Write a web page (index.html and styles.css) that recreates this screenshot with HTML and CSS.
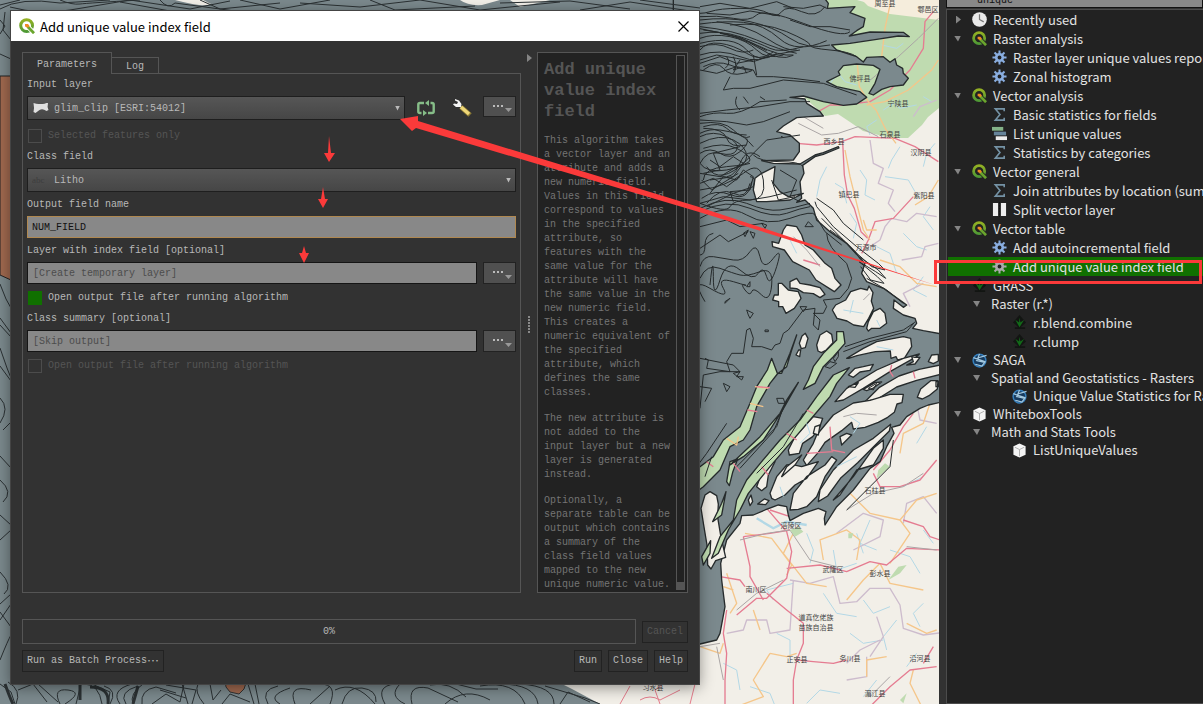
FILE: index.html
```html
<!DOCTYPE html>
<html lang="en">
<head>
<meta charset="utf-8">
<title>Add unique value index field</title>
<link rel="stylesheet" href="styles.css">
</head>
<body>
<svg class="defs" width="0" height="0" aria-hidden="true">
  <defs>
    <linearGradient id="qg" x1="0" y1="0" x2="0" y2="1"><stop offset="0" stop-color="#93b023"/><stop offset="1" stop-color="#4f9a35"/></linearGradient>
    <symbol id="qgis" viewBox="0 0 16 16"><circle cx="7.600" cy="7.600" r="5.900" fill="none" stroke="url(#qg)" stroke-width="3"/><path d="M8.500 8.500l7 7" stroke="#222" stroke-width="4.600"/><path d="M8.500 8.500l6.500 6.700" stroke="#6aa52d" stroke-width="2.800"/><path d="M6 6h3l1.500 2-1.500 1.800-3-1.300z" fill="#ef8a25"/></symbol>
    <symbol id="qgisw" viewBox="0 0 16 16"><circle cx="7.600" cy="7.600" r="5.900" fill="none" stroke="url(#qg)" stroke-width="3"/><path d="M8.500 8.500l7 7" stroke="#fff" stroke-width="4.600"/><path d="M8.500 8.500l6.500 6.700" stroke="#6aa52d" stroke-width="2.800"/><path d="M6 6h3l1.500 2-1.500 1.800-3-1.300z" fill="#ef8a25"/></symbol>
    <symbol id="gear" viewBox="0 0 16 16"><path d="M8 .5v15M.5 8h15M2.700 2.700l10.600 10.600M13.300 2.700L2.700 13.300" stroke="currentColor" stroke-width="2.200"/><circle cx="8" cy="8" r="3.500" fill="#222" stroke="currentColor" stroke-width="2.800"/></symbol>
    <symbol id="sigma" viewBox="0 0 16 16"><path d="M13 4.500V2H3.500L8.500 8l-5 6H13v-2.500" fill="none" stroke="#7492a5" stroke-width="1.700"/></symbol>
    <symbol id="list" viewBox="0 0 16 16"><path d="M0 1h12v4H0z" fill="#84b287"/><path d="M2 6h13v4H2z" fill="#66849a"/><path d="M4 11h12v4H4z" fill="#ececec"/></symbol>
    <symbol id="split" viewBox="0 0 16 16"><path d="M1 1h5.500v14H1zM9.500 1H15v14H9.500z" fill="#eee"/><path d="M8 0v16" stroke="#111" stroke-dasharray="2 1"/></symbol>
    <symbol id="clock" viewBox="0 0 16 16"><circle cx="8" cy="8" r="7.800" fill="#e9e9e9"/><path d="M8 2.500V8l4.500 2.500" fill="none" stroke="#777" stroke-width="1.300"/></symbol>
    <symbol id="grass" viewBox="0 0 16 16"><path d="M8 0l7 8-7 6-7-6zM3 13h11v2H3z" fill="#121512"/><path d="M8 13L3.500 5l4 3L8 3l1 5 4-3z" fill="#126a18"/></symbol>
    <symbol id="saga" viewBox="0 0 16 16"><circle cx="8" cy="8" r="6.800" fill="#173b5f" stroke="#357fbd" stroke-width="1.600"/><path d="M15.500 2.500L7 5 5 8l8.500 2-3 4-7-2M1.500 5l13 4.500M8 1L6 6" fill="none" stroke="#a3c8df" stroke-width="1.300"/></symbol>
    <symbol id="cube" viewBox="0 0 16 16"><path d="M8 .5l6.500 3v9L8 15.500l-6.500-3v-9z" fill="#f4f4f4"/><path d="M3 4.500L8 7l5-2.500M8 7v7" fill="none" stroke="#aaa"/></symbol>
  </defs>
</svg>

<main class="map">
  <svg class="canvas" viewBox="0 0 939 704" preserveAspectRatio="xMinYMin slice" role="img" aria-label="Lithology map">
    <rect width="939" height="704" fill="#f2efe8"/>
    <path class="veg" d="M780 0h77l33 9 49 6v93l-11 9-6 8-14 13h-18l-27-7-13-9-12-8-13 2-20-18z"/>
    <path d="M862 0l6 6 22 8 49 6V0z" fill="#f5eddc"/>
    <rect width="700" height="704" class="rock"/>
    <path d="M0 76h11v204l-11-5z" fill="#a0694f" stroke="#222"/>
    <path d="M225 680h22l-3 9-5 5-9-2-4-5z" fill="#a0694f" stroke="#333"/>
    <path d="M562 684l10 5 28 15h100v-20z" fill="#f2efe8"/>
    <path d="M175 0q30 8 36 4l-8-4zM460 0q8 6 22 5l18-5zM550 0l-30 7-10-7z" fill="#f2efe8"/>

    <g transform="translate(690 0) scale(.33333)">
      <g class="water">
        <path d="M420 250l25-30 20 25 35 10M600 200l-20 20 5 30-25 15M640 130l-20 15-45-10M580 330l30-20 20 15 50-10M700 290l25 15M560 360l-30 20 10 25M410 500l-20 40-10 50M470 610l-10-45-25-15M510 510l20 30-5 45 30 15M585 530l70 10 20 35M630 440l-25 40-10 25M700 500l10-40 25-30M480 640l20 30-10 45M720 620l-20 30 30 40M560 740l40 20 20 60M640 700l40 40 30 10M700 830l-30 40 40 20"/>
      </g>
      <g class="border"><path d="M540 420l10 70 30 15-15 45 45 20-15 40 20 25M740 650l-60-10-30 25-45-10-20 25-15 40-30 20M740 300l-50 20-20 30M745 730l-40 10-10 30-60 10M660 920l-20-40 60-30"/></g>
      <g class="road">
        <path d="M730 35l-25 30-5 80-40 65-60 60-60 35-80 10-40 0-45 25M320 430l60 5 75-10 40-15 120 5 60 25 70 45M458 425l5 100 10 60 20 40 20 70 20 20M670 590l-60 65-55 10-20 55-20 40"/>
      </g>
      <g class="orange"><path d="M745 180l-20 30-70 60-70 35-55 10M500 170l8 90 30 50 20 20 30 60 30 40M465 450l15 80 20 80 20 80 20 30M600 15l-15 70-10 85M745 540l-30 50-40 25M560 690l-30 0-10-30M740 860l-60-10-50-50-60-20"/></g>
      <g class="trail"><path d="M745 55l-60 60-60 55-90 75M325 370l70 35 50-5 60-20 60 30M340 350l60 35"/></g>
      <g class="water"><path d="M430 1650l10 60 60-20M500 1600l20 60M540 1560l-30 70 50 20M600 1650l60 20 30 50M700 1590l30 40M400 1780l40 60 60 10M250 1800l-20-30 80-20M350 2110l40-40 60 10M100 1990l40 20 10 60M480 1900l40 30 60-10M650 2000l30-40M700 1430l-60 30M710 1280l-30 50M520 1800l30 40 50-20M260 1900l40 20 0 50M620 1860l-40 50 10 40M700 1810l-30 30 20 40M560 2040l-40 50M180 2060l60 20 20 50M350 1600l20 50-10 40"/><path d="M200 1555l50 30 40-20 60 10" stroke-width="7"/></g>
      <g class="border"><path d="M300 1740l60 10 70-20 20 80 50-5 40-40 60 0 30 50 10 70 60 20 80-10M440 1600l80-60 60 20-10 50-80 40M740 1540l-40-50-50 20-10 60M110 1900l50-10 10-30 60 0 10 40 60-10 10-150M470 1990l40-40 60-30M560 1850l20 60-40 60M470 2040l60-10 0-60M680 1210l10 50 50 10"/></g>
      <g class="orange"><path d="M165 1600l80 15 60 80-15 30M310 1600l-30 60 70 90 60 10M400 1680l-10-60 80-30 40 30-10 60M570 1690l-50 50-50 60M570 1690l30 60 100 20M600 1690l60-90-30-40-90-20-60-60M110 1720l30 90-20 30M190 1830l20 60M240 1960l50 10 30-10M700 2130l-40-80 10-40M240 1960l-50 80 30 50-80 30M650 1870l60 30 30-10M30 1940l60 20 10-30M630 1560l50-60 60-20M100 1760l30 10M720 1210l-20 60-60 30-10 60M530 2030l0-50 60-10"/></g>
      <g class="road"><path d="M230 1525l60 70 15 60-15 80-60 60-30 0-60 50M160 1610l80-10 60-10M160 1610l20 90 0 30 40 70M290 1705l100-10 80 20 70-30 50 10 60-50 100 5M230 1780l60 50 50 40 0 60-20 50-10 60 0 100M320 1980l50 5 60 5 40-10M540 2120l60-60 60-50 80-10M90 1730l60 10 15 20M110 1830l-10 70 10 60-5 80 0 80M300 1550l-60-20M550 1420l20 40 60 0 60-20 50-60M730 1940l-30 50M640 1560l60 20 20 30 30 10M670 1240l-30 40-40 70-50 60"/></g>
      <g class="trail"><path d="M150 1620l80-20 70-10 60 90 80 20M470 1530l80-50 90-20 60-40M650 1640l90 10M140 1830l60-50 80-40M540 2090l60-60M100 2040l-20-100M30 1940l60-10"/></g>
      <path class="veg" d="M565 1410l20-20 15 10-40 35zM595 1740l30-40 25-5-20 25zM475 1600h15l-5 15h-10zM300 1590l25-10 15 15-25 15zM630 2100l20-20-10 30z"/>

      <path class="rock line" d="M-50-10H400L415 10 412 25 495 20 480 38 525 55 520 80 500 92 478 108 540 96 640 97 658 110 625 108 560 118 480 130 425 135 440 150 500 170 520 186 530 172 580 170 600 187 615 176 620 195 638 205 640 220 655 235 640 255 600 260 575 268 550 285 537 280 555 250 570 208 550 196 500 192 460 197 445 215 450 225 410 245 440 260 510 275 530 292 500 312 460 316 400 305 340 288 300 292 345 297 350 310 390 335 400 348 360 350 320 353 280 378 260 395 300 405 328 430 328 455 310 480 215 482 250 490 330 492 375 465 400 458 445 440 447 444 400 463 375 470 338 496 342 520 330 545 335 595 320 607 345 600 370 625 380 660 420 695 470 730 495 755 510 775 525 790 515 820 530 845 580 865 640 908 650 915 640 922 612 900 610 925 640 945 675 955 680 970 668 985 700 992 760 1003V1205L715 1215 690 1225 650 1250 630 1275 605 1282 612 1300 590 1340 570 1385 540 1405 490 1470 440 1520 405 1575 403 1555 408 1535 385 1525 340 1540 300 1562 295 1545 290 1520 265 1515 225 1530 190 1545 155 1547 150 1570 110 1620 92 1690 95 1740 105 1820 90 1900 80 1920 30 1932-50 1932z"/>
      <g class="hole line">
        <path d="M190 570l5-35 20-15 40-20-5 50 20 25 25 15 45-10-40 20-70 5-30 0z"/>
        <path d="M280 690l10-15 30 5 15 25 10 30 25 15 35 40 20 15 10 30 18 20-20 20-55-35-20-30-50-25-25-35-35-10-2-15 20 5z"/>
        <path d="M300 845l20-10 10 15 30 5 30 8 15 20-15 10-20-12-30-3-20-12-20-2zM265 850l10 0 20 20 30 5 8 20-20 30-25 15-10-20-12 0 0-15-18-5 5-15 12 0z"/>
        <path d="M427 930l10-15 30-15 15-25 30-10 20 5 5-12 12 20-5 25 7 22-15 30-15 25-30-5-20-12-30-8zM530 985l5-20 15-30 20-10 15 15 5 30-20 15-25 0-10 8z"/>
        <path d="M328 1030l8-22 10-8 8 15-8 28-12 3zM380 1035l10-30 20-12 15 10 4 25-20 22-15 8-10-5zM318 1065l8-15 6 0-3 20zM275 410h1z"/>
        <path d="M470 1075l50-30 40-20 80-15 22 5 3 25-22 35-20 5-5-10-15 5-2-22-45 2-55 12-25 8z"/>
        <path d="M475 1125l20-20 25-5 30-7-10 18-30 5-20 16zM435 1205l35-40 90-55 80-35 48-13-8 8-80 45-80 50-60 35zM527 1203l40-40 60-35 60-20 73-15v28l-80 20-60 20-60 38zM475 1160l30-12-10 14zM520 1168l35-20 20-2-25 18-20 8z"/>
        <path d="M340 1380l30-50 10-25 50-60 30-18 30-18 50-8 60-18 40 0-4 25-15 4-8 25-20 15-28 15-40 15-35 5-5-20-30 25-50 35-20 30-35 40z"/>
        <path d="M295 1350l20-40 55-60 28 5-10 30-20 25-30 20-10 30-30 5zM385 1505l5-35 40-60 60-60 60-35 52-42-4 20-45 45-50 50-50 45-40 55zM430 1500l60-70 60-85 30-25 0 25-30 50-50 15-50 75z"/>
        <path d="M300 1530l10-50 40-50 55-35 20-25 15 10-35 50-25 60-30 30-25 8zM240 1480l20-50 30-35 15-2 30 7 50-15-35 50-35 20-30 30-30 15-10-5zM200 1460l20-55 30-30 5 10-20 40-5 35-15 12z"/>
        <path d="M450 1310l20-10 15 5-30 30zM370 1300l5-20 15-5-5 30zM715 1085l10-20 20-2v20l-15 8zM650 1095l20-10-5-15 10 2 15 0-15 20zM682 1192l10-25 30-25 22 0-2 25-25 20-20 10zM738 1145h8v15h-8zM290 1400l45-35-20 30-40 35z"/>
        <path d="M45 1485l15-10 20 12 5 25-2 40 10 60 14 60-30 10-14 25-10-12-2-60-10-60-8-50zM-10 1470l30-60 10 5-5 35-20 45zM175 1500l8-15 5 20-8 12zM203 1512l20-15 14 5-10 12z"/>
      </g>
      <path class="veg line" d="M320 1005L300 1060 275 1120 262 1120 245 1075 232 1110 200 1160 180 1210 150 1280 100 1320 70 1370 30 1400-10 1450 0 1490 40 1460 90 1410 120 1340 160 1320 180 1290 200 1220 240 1150 262 1122 290 1100 305 1050zM440 995L460 995 465 1030 430 1070 400 1100 375 1150 340 1168 355 1140 370 1100 400 1060 440 1020zM478 1103L430 1125 380 1190 330 1260 270 1320 215 1385 170 1440 140 1500 130 1560 90 1610 65 1675 85 1660 115 1590 150 1530 175 1480 240 1400 300 1330 360 1260 420 1190 440 1150zM325 1147L290 1200 270 1240 210 1310 120 1395 160 1370 220 1320 275 1235zM108 1475L95 1510 68 1565 95 1545zM62 1622L35 1670 40 1695 60 1660zM120 1385l-10 60 8 12 10-40 15-40z"/>
      <path class="orange" d="M110 1315l30 20 5-25M195 1160l40 5M180 1210l40 10"/>
      <g class="road"><path d="M200 1160l40 3M172 1230l30 5M350 1230l20 10M340 780l50 15M605 1095l-5 20 10 15M670 1115l5 20M420 1280l5 70 40 8M350 1360l80-5M290 1300l30 20M130 1390l20 25M50 1385l20 15M215 1400l20 25"/></g>
      <g class="trail"><path d="M310 710l40 40 40 50M460 1250l40-10 60 5M520 900l20-20"/></g>
      <g class="water"><path d="M300 720l20 40M460 930l60 10M490 900l-10 40M560 960l10 20M480 1250l30 20-20 30M350 1270l10 30-30 30M560 1040l50 10M270 1460l10 30M440 1400l60-30"/></g>
      <path class="linework" d="M465 1040l75-25 100-25 30-20M460 1055l80-30 110-30 25-30M380 595l50 35 30 40 60 50M375 605l5 15 50 60 70 60 65 50 20 20-40-10-50-45-60-60-40-40M420 690l40 30 40 45 65 45 22 25-30-20-50-30 55 45 20 20-40-10-30-40M530 835l60 35 50 40M470 1530l70-70 60-60 10-80"/>
      <g class="linework">
        <path d="M0 35q30 10 60 0t90-10 85 15 40-5 60 0 70-15M30 50q50-5 100 5t70-10 140 25 140 25M30 72q70-10 130-5t110 50 140 5M30 100q60-10 120 10t90 35 100-5M30 80q100 10 170 40t120 40M40 90q90 10 160 45t110 30M80 65q90 10 150 50t90 35M120 75q100-10 170 20t70 40 60 15 80 20M30 115q40-15 90-5t80 40 80 15M30 130q100-25 140 20t90 10M30 150q20-25 60-20t80 30 70 0M30 180l50-15 60 10 50 10 60-20 80-15M30 190l60-20 50 20 50-10M110 170q15 20-5 35M130 170q15 30 0 50M150 180l-20 30 30-10 10 20M30 210l50 10 60-20 50 10 10 20 50 0 60 5 80 10M120 230l-20 40 30-5 50 0 100-25 120 10 100 35M190 165l10 60M30 340l80-10 100-10 90-15 60 0"/>
        <path d="M30 20l60-10 90 15 80-20 50 20M30 60q80-10 150 5t120 50 120 20M30 86q120 20 180 60t100 20M50 40l70 5 60-12 90 15M30 165q60-20 120 5t100-15M90 100l60 12 80 40M30 140q50-15 90 5t70 5M40 200q40-20 80-5t60 15-20 10-60-15-60 5M300 60l60 20 60 0 60 10M280 20l60 5 50-10 20 10"/>
        <path d="M30 350q40-15 80-10t100-35l80-5M30 400q30-15 60-10t50 10 50 40M30 430q60-30 100-10t40 50-60 40-80-20M40 445q60-20 100 0t40 35-70 20-70 40M50 500q40 60 120-20l60-60 100-15M30 570q80-10 130-50t60 20-40 60-60 20-90-10M60 580l40-50 40 10 20-30 30 20-10 40-60 5 10 30M30 610l70-20 80 10 60-10 80-20M30 625q80-40 140-15t100 20 90-20M30 635q80-40 150-10t110 15 70-20M30 655q80-45 140-10t130 10 75-10l30 50 50 40M30 680l80-20 40 20 70-10M30 360l80 5 60 10 50-10 80-30M30 370q70-10 100 20t50 20M40 385q60 0 70 30t60 20M190 465q20 20 80 20t70 15M150 440l-80 20 20 50-50 10M30 520l60 10 50-30 40-10M35 540l30 30 80-50M180 530q20 0 10 30l-60 20-80 40"/>
        <path d="M40 380q50-15 70 5t60 20M30 410q40-20 80 0t30 40-50 10-60 30M30 460q30-20 60 0t60-5 20-40M60 480l30 20 40-30 30 20-30 40-70 10M35 595q40-30 90-10t60-40M30 550l40-15 40 25 40-30M50 610q40-50 80-30t50-30M210 470q-40-30-60 20t-60 40M140 290q-10 25 10 40M160 290l15 20M210 290l15 10M245 540l20 60 50-10M270 510l50 30-20 50 30 15M160 700l15-10-10 20zM190 715l-10-20 15 5zM215 670l15 5-5 10zM345 680l10-15 15 15z"/>
        <path d="M30 745l60-40 25 20 60-30M30 765q15 0 15-30t25-35M30 800q10-35 40-30t60 10 50-25 30 15 40 5 10 25-30 30-25-10-55-10-60 30-20-10-10 25M30 835q20-45 60-30t60 20 60-10 35 40-30 30-30-10-20-5 0-15-35-10-30 20-40 0-15 40M410 700q0 40 60 90l15 45-10 30-25 30-50 5 10 20-10 20-30 0 20 20-5 30-15-15 5-50-35 5-45 60-15 10-10 30-15 5-10 15-30-10-30 0 5-25-10-30-10 5-10 70-35 0-15 25 10 30-70-10 5-25-10-5M30 1075l100 20 20 20-60 0-50 10-10 100M30 1160l35 5-20 40"/>
        <path d="M-10 1440l60-80 60-90M140 1400l120-120 15-45M150 1405l100-110 30-70M200 1420l80-80 60-100M65 1370l-20 60M170 860l10-15 0 15zM105 905l15-10-15 15zM170 930l20 10-10 15-5-10zM225 990h10v5h-10zM130 1120l20-5-10 15 20 0-5 10zM100 1150l20 10-10 15zM405 1100l15-15 20 5-20 15zM430 1075l15-20 0 15-10 15zM535 1165l25-15-10 20zM265 1210l-5-15 20 0 5 15zM330 920l20 0-10 15zM60 1750"/>
      </g>
    </g>

    <g class="linework2">
      <path d="M0 5l20-5M0 9q20-12 60-6l50-3M10 7q30 8 60 3l60-10M60 0q12 5 20 4t60-4M120 2l50 9M130 0l60 9 40-8M160 0q8 10 15 3l60 8M200 0l20 9 60-6M240 0l40 9 50-9M300 3l60 4 60-7M370 0l25 10 80-4M420 0l60 10 80-8M500 3l70-2 60 8M580 10l50-8 60 9M640 0l60 8"/>
      <path d="M0 20l5 6-5 8M0 54l11 5M5 12l-2 18 8 10M0 284l6 15 5 9M0 318l11 15M0 325l11 12M0 348l7 20 4 10M0 366l11 15M0 398q10 10 0 25M3 430l8-8M0 456l11 12M0 480q14 12 3 22M0 515l11 10M0 540l11-10M0 572q14 14 4 22M0 604l11-10M0 612l11 15M0 620l11-16M0 660q8-20 11-25"/>
      <path d="M0 684l11 8 4 12M8 682q14 8 8 22M18 690l15-6 14 18M38 684l20 18M60 704q-8-16 8-14t-3 14M76 704l5-20M84 684q15 0 18 20M92 684l18 8-2 12M104 686q14 4 6 18M120 704q-10-14 12-20M126 704q-8-12 12-18M133 704q-4-10 10-20M142 704q-2-14 14-17l20 6M152 704l14-10 14 8 4-18M160 690l26 8M166 685l30 5-4 14M188 704l-6-20M198 684q-4 8 6 20M210 684l3 16 8-10M222 704l8-10 20 8M248 684l6 20M255 684l4 20M268 704q-8-14 10-18M280 704q-14-8 10-16M295 704q-8-20 16-14M310 704l20-18M320 684q18 0 10 20M335 690q20-10 40 14M342 704q5-18 20-16t14 14M385 704q-10-18 10-20M400 684q-12 12 5 20M412 704q-5-20 16-16l30 14M430 685q20-4 36 12M445 704q20-18 45-4M456 684l20 5 22 0M480 686q35-6 45 18M500 684q35 0 38 20M520 684q34 2 34 20M545 686l40 12 15 6M560 704l8-12 22 10"/>
      <path class="thick" d="M80 684v16M90 687q20 0 18 17M5 684q5 14 8 20M138 686l-5 18"/>
      <path class="red" d="M620 704l10-18M660 704l-5-14 8-6M690 704l5-20M640 700q10-6 20 0l20-10"/>
    </g>

    <g class="places">
      <text x="885" y="6">周至县</text><text x="928" y="12">鄠邑区</text><text x="860" y="81">佛坪县</text><text x="898" y="106">宁陕县</text><text x="890" y="137">石泉县</text><text x="834" y="144">西乡县</text><text x="921" y="155">汉阴县</text><text x="849" y="197">镇巴县</text><text x="924" y="198">紫阳县</text><text x="866" y="250">万源市</text><text x="875" y="493">石柱县</text><text x="791" y="528">涪陵区</text><text x="833" y="572">武隆区</text><text x="880" y="576">彭水县</text><text x="756" y="592">南川区</text><text x="816" y="620">道真仡佬族</text><text x="816" y="630">苗族自治县</text><text x="797" y="662">正安县</text><text x="850" y="661">务川县</text><text x="920" y="661">沿河县</text><text x="875" y="696">湄江县</text><text x="653" y="690">习水县</text>
    </g>
  </svg>
</main>

<aside class="dock">
  <input class="search" type="text" value="unique" aria-label="Search algorithms">
  <ul class="tree">
    <li class="row"><i class="twist closed"></i><svg class="icon"><use href="#clock"/></svg><span>Recently used</span></li>
    <li class="row"><i class="twist"></i><svg class="icon"><use href="#qgis"/></svg><span>Raster analysis</span></li>
    <li class="row alg"><svg class="icon blue"><use href="#gear"/></svg><span>Raster layer unique values report</span></li>
    <li class="row alg"><svg class="icon blue"><use href="#gear"/></svg><span>Zonal histogram</span></li>
    <li class="row"><i class="twist"></i><svg class="icon"><use href="#qgis"/></svg><span>Vector analysis</span></li>
    <li class="row alg"><svg class="icon"><use href="#sigma"/></svg><span>Basic statistics for fields</span></li>
    <li class="row alg"><svg class="icon"><use href="#list"/></svg><span>List unique values</span></li>
    <li class="row alg"><svg class="icon"><use href="#sigma"/></svg><span>Statistics by categories</span></li>
    <li class="row"><i class="twist"></i><svg class="icon"><use href="#qgis"/></svg><span>Vector general</span></li>
    <li class="row alg"><svg class="icon"><use href="#sigma"/></svg><span>Join attributes by location (summary)</span></li>
    <li class="row alg"><svg class="icon"><use href="#split"/></svg><span>Split vector layer</span></li>
    <li class="row"><i class="twist"></i><svg class="icon"><use href="#qgis"/></svg><span>Vector table</span></li>
    <li class="row alg"><svg class="icon blue"><use href="#gear"/></svg><span>Add autoincremental field</span></li>
    <li class="row alg selected"><svg class="icon grey"><use href="#gear"/></svg><span>Add unique value index field</span></li>
    <li class="row"><i class="twist"></i><svg class="icon"><use href="#grass"/></svg><span>GRASS</span></li>
    <li class="row group"><i class="twist"></i><span>Raster (r.*)</span></li>
    <li class="row deep"><svg class="icon"><use href="#grass"/></svg><span>r.blend.combine</span></li>
    <li class="row deep"><svg class="icon"><use href="#grass"/></svg><span>r.clump</span></li>
    <li class="row low"><i class="twist"></i><svg class="icon"><use href="#saga"/></svg><span>SAGA</span></li>
    <li class="row group"><i class="twist"></i><span>Spatial and Geostatistics - Rasters</span></li>
    <li class="row deep low"><svg class="icon"><use href="#saga"/></svg><span>Unique Value Statistics for Rasters</span></li>
    <li class="row low"><i class="twist"></i><svg class="icon"><use href="#cube"/></svg><span>WhiteboxTools</span></li>
    <li class="row group"><i class="twist"></i><span>Math and Stats Tools</span></li>
    <li class="row deep low"><svg class="icon"><use href="#cube"/></svg><span>ListUniqueValues</span></li>
  </ul>
</aside>

<section class="dialog" role="dialog" aria-labelledby="dlg-title">
  <header class="titlebar">
    <svg class="logo"><use href="#qgisw"/></svg>
    <h1 id="dlg-title">Add unique value index field</h1>
    <button class="x" type="button" aria-label="Close window"><svg viewBox="0 0 11 11" width="11" height="11"><path d="M.5.5l10 10M10.500.5l-10 10" stroke="#000" stroke-width="1.200"/></svg></button>
  </header>
  <div class="content">
    <div class="left">
      <div class="tabs" role="tablist">
        <button class="tab active" type="button" role="tab" aria-selected="true">Parameters</button>
        <button class="tab" type="button" role="tab" aria-selected="false">Log</button>
      </div>
      <form class="pane">
        <label class="lbl" for="layer">Input layer</label>
        <div class="line">
          <div class="combo">
            <svg class="polyicon" viewBox="0 0 16 12"><path d="M1 1q3 1 5 1t4 0 4-1h1.500q-1 3.500.5 7l-2 1q-4-3-7-1l-4 3-2-1q1-4 0-9z" fill="#e0e0e0"/></svg>
            <select id="layer"><option>glim_clip [ESRI:54012]</option></select>
          </div>
          <div class="tools">
            <button class="plain" type="button" aria-label="Iterate over this layer"><svg viewBox="0 0 18 16" width="18" height="16"><g fill="none" stroke="#86bd88" stroke-width="2.400"><path d="M7 3H3Q1.300 3 1.300 4.500v7Q1.300 13 3 13h1.500M11 13h4q1.700 0 1.700-1.500v-7Q16.700 3 15 3h-1.500"/></g><path d="M12 0v6L8 3zM6 16v-6l4 3z" fill="#86bd88"/></svg></button>
            <button class="plain" type="button" aria-label="Advanced options"><svg viewBox="0 0 20 18" width="20" height="18"><path d="M9 8l9 8" stroke="#8b7a35" stroke-width="5"/><path d="M9 8l8 7" stroke="#eed778" stroke-width="3.400"/><path d="M3 0l4 1.500 2.500 3.500-.5 3-5 0-3-2.500 1-1 3 .5 1-2-3-1.500z" fill="#f4f4f4"/></svg></button>
          </div>
          <button class="more short" type="button" aria-label="Browse input"></button>
        </div>
        <label class="check off first"><input type="checkbox" disabled>Selected features only</label>
        <label class="lbl" for="field">Class field</label>
        <div class="combo"><span class="abc" aria-hidden="true">abc</span><select id="field"><option>Litho</option></select></div>
        <label class="lbl tight" for="name">Output field name</label>
        <input class="text focus" id="name" type="text" value="NUM_FIELD">
        <label class="lbl tight" for="out1">Layer with index field [optional]</label>
        <div class="line"><input class="text" id="out1" type="text" placeholder="[Create temporary layer]"><button class="more" type="button" aria-label="Browse output layer"></button></div>
        <label class="check"><input type="checkbox" checked>Open output file after running algorithm</label>
        <label class="lbl" for="out2">Class summary [optional]</label>
        <div class="line"><input class="text" id="out2" type="text" placeholder="[Skip output]"><button class="more" type="button" aria-label="Browse summary table"></button></div>
        <label class="check off"><input type="checkbox" disabled>Open output file after running algorithm</label>
      </form>
    </div>
    <div class="splitter"><i class="twist closed"></i><i class="grip"></i></div>
    <article class="help">
      <div class="helptext">
        <h2>Add unique value index field</h2>
        <p>This algorithm takes a vector layer and an attribute and adds a new numeric field. Values in this field correspond to values in the specified attribute, so features with the same value for the attribute will have the same value in the new numeric field. This creates a numeric equivalent of the specified attribute, which defines the same classes.</p>
        <p>The new attribute is not added to the input layer but a new layer is generated instead.</p>
        <p>Optionally, a separate table can be output which contains a summary of the class field values mapped to the new unique numeric value.</p>
      </div>
      <div class="scroll"></div>
    </article>
  </div>
  <footer class="foot">
    <div class="line"><div class="progress" role="progressbar" aria-valuenow="0">0%</div><button class="btn" type="button" disabled>Cancel</button></div>
    <div class="line"><button class="btn batch" type="button">Run as Batch Process<span class="dots">⋯</span></button><button class="btn" type="button">Run</button><button class="btn" type="button">Close</button><button class="btn" type="button">Help</button></div>
  </footer>
</section>

<svg class="notes" width="1203" height="704" aria-hidden="true">
  <g fill="#fb3a3a"><path d="M400 119l18-3v5L699 207l236 78-236-73-283-84-4 3z"/>
  <path d="M329 136l2 17h4l-6 9-5-9h4zM323 187l2 12h3l-5 9-5-9h3zM304 246l2 7h3l-5 10-5-10h3z"/></g>
</svg>
<div class="mark"></div>
</body>
</html>
```

FILE: styles.css
```css
* { box-sizing: border-box; }
body { margin: 0; height: 100vh; display: flex; overflow: hidden; position: relative; background: #323232; font: 13px "Noto Sans CJK SC", "Noto Sans", sans-serif; }
button, input, select { font: inherit; color: inherit; margin: 0; border-radius: 0; }
.defs { position: absolute; }

/* map */
.map { flex: 1; min-width: 0; overflow: hidden; }
.canvas { display: block; width: 100%; height: 100%; }
.rock { fill: #7b898d; }
.hole { fill: #f2efe8; }
.veg { fill: #bfdbb0; }
.line { stroke-linejoin: round; }
.canvas .line { stroke: #262b2c; stroke-width: 4; }
.linework, .linework2, .water, .border, .road, .orange, .trail { fill: none; stroke-linejoin: round; }
.linework { stroke: #262b2c; stroke-width: 3; }
.linework2 { stroke: #2b3133; stroke-width: 1; }
.thick { stroke-width: 3; }
.red { stroke: #e57d8c; }
.water { stroke: #b3d8e6; stroke-width: 3; }
.border { stroke: #cdbccd; stroke-width: 4; }
.road { stroke: #e57c91; stroke-width: 4; }
.orange { stroke: #f5c68a; stroke-width: 4; }
.trail { stroke: #aaa5a5; stroke-width: 3; }
.places { font-size: 7px; text-anchor: middle; fill: #444; }

/* toolbox dock */
.dock { width: 264px; flex: none; padding-left: 7px; background: #323232; overflow: hidden; display: flex; flex-direction: column; }
.search { flex: none; height: 22px; margin-top: -14px; padding: 6px 0 0 30px; border: 1px solid #111; background: #888; color: #111; font: 10px "Liberation Mono", monospace; }
.tree { flex: 1; list-style: none; margin: 1px 0 0; padding: 0 0 0 1px; border: 1px solid #4c4c4c; border-right: 0; background: #222; color: #e2e2e2; }
.row { display: flex; align-items: center; height: 19px; padding-left: 5px; white-space: nowrap; line-height: 19px; }
.row.group, .row.low { height: 18px; line-height: 18px; }
.twist { width: 10px; height: 6px; flex: none; margin-right: 9px; background: #858585; clip-path: polygon(1px 0, 8px 0, 5px 6px); }
.twist.closed { height: 8px; clip-path: polygon(3px 0, 8px 4px, 3px 8px); }
.icon { width: 15px; height: 15px; flex: none; margin-right: 6px; }
.row.alg { padding-left: 44px; }
.row.group { padding-left: 24px; }
.row.deep { padding-left: 64px; }
.blue { color: #8aaee0; }
.grey { color: #aaa; }
.selected { background: #107000; }

/* dialog */
.dialog { position: absolute; left: 11px; top: 11px; width: 688px; background: #323232; color: #b8b8b8; box-shadow: 0 0 0 1px #444, 0 3px 14px rgba(0,0,0,.45); font: 10px/14px "Liberation Mono", monospace; }
.titlebar { display: flex; align-items: center; height: 30px; padding: 0 10px 0 8px; background: #fff; color: #000; }
.titlebar h1 { flex: 1; margin: 0; font: 13px "Noto Sans CJK SC", "Noto Sans", sans-serif; }
.logo { width: 16px; height: 16px; margin-right: 5px; }
.x { display: flex; padding: 0; border: 0; background: none; }
.content { display: flex; padding: 11px 11px 0; height: 552px; }
.left { flex: 1; display: flex; flex-direction: column; }
.tabs { display: flex; align-items: flex-end; height: 21px; }
.tab { height: 16px; padding: 2px 14px 0; border: 1px solid #555; border-left: 0; border-bottom: 0; background: none; }
.tab.active { height: 22px; margin-bottom: -1px; border-left: 1px solid #555; background: #323232; z-index: 1; }
.pane { flex: 1; display: flex; flex-direction: column; padding: 4px; border: 1px solid #555; }
.lbl { margin: 7px 0 4px; }
.lbl:first-child { margin-top: 0; }
.lbl.tight { margin-top: 6px; }
.line { display: flex; gap: 6px; align-items: flex-start; }
.combo { display: flex; flex: none; align-items: center; height: 24px; padding: 0 4px; border: 1px solid #1e1e1e; background: linear-gradient(#565656, #464646); }
.line .combo { flex: 1; }
.combo::after { content: ""; width: 5px; height: 5px; background: #bbb; clip-path: polygon(0 0, 100% 0, 50% 100%); }
.combo select { flex: 1; appearance: none; border: 0; padding: 1px 0 0; background: none; outline: 0; }
.polyicon { width: 17px; height: 12px; margin-right: 5px; }
.abc { width: 22px; color: #3d3d3d; font: 9px "Liberation Serif", serif; }
.tools { display: flex; align-items: center; gap: 17px; height: 24px; padding: 0 5px 0 6px; }
.plain { display: flex; padding: 0; border: 0; background: none; }
.more { position: relative; width: 33px; height: 22px; flex: none; border: 1px solid #222; background: #505050; }
.more::before { content: ""; position: absolute; left: 9px; top: 8px; width: 10px; height: 2px; background: repeating-linear-gradient(90deg, #bbb 0 2px, transparent 2px 4px); }
.more::after { content: ""; position: absolute; right: 3px; bottom: 4px; width: 7px; height: 4px; background: #999; clip-path: polygon(0 0, 100% 0, 50% 100%); }
.more.short { height: 21px; }
.check { display: flex; align-items: center; gap: 6px; height: 14px; margin: 7px 0 0 1px; line-height: 16px; }
.check.first { margin-top: 9px; }
.check input { appearance: none; width: 14px; height: 14px; border: 1px solid #4c4c4c; }
.check input:checked { background: #107000; border-color: #107000; }
.off { color: #555; }
.text { height: 22px; flex: none; min-width: 0; padding: 0 5px; border: 1px solid #151515; background: #888; color: #111; outline: 0; }
.line .text { flex: 1; }
.text::placeholder { color: #4c4c4c; opacity: 1; }
.focus { padding-left: 4px; border-color: #b08850; }
.splitter { width: 16px; display: flex; flex-direction: column; align-items: center; padding-top: 2px; }
.splitter .twist { margin: 0; }
.grip { width: 2px; height: 17px; margin-top: 254px; background: repeating-linear-gradient(#888 0 2px, transparent 2px 3px); }
.help { width: 151px; display: flex; border: 1px solid #555; background: #222; color: #747474; }
.helptext { flex: 1; padding: 6px 2px 0 6px; overflow: hidden; }
.helptext h2 { margin: 0 0 12px; font-size: 17px; line-height: 21px; color: #555; }
.helptext p { margin: 0 0 12px; }
.scroll { width: 9px; margin: 2px; border: 1px solid #555; display: flex; align-items: flex-end; }
.scroll::after { content: ""; width: 100%; height: 7px; background: #555; }
.foot { padding: 26px 11px 12px; }
.foot .line { align-items: center; }
.foot .line + .line { margin-top: 6px; }
.progress { flex: 1; height: 25px; display: flex; align-items: center; justify-content: center; border: 1px solid #555; }
.btn { height: 22px; padding: 0 4px; border: 1px solid #222; background: #323232; }
.btn:disabled { color: #555; }
.batch { display: flex; align-items: center; margin-right: auto; }
.dots { font: 12px/14px "Noto Sans CJK SC", sans-serif; }

/* annotations */
.notes { position: absolute; left: 0; top: 0; pointer-events: none; }
.mark { position: absolute; left: 934px; top: 260px; right: 1px; height: 24px; border: 3px solid #fb3a3a; pointer-events: none; }
```
